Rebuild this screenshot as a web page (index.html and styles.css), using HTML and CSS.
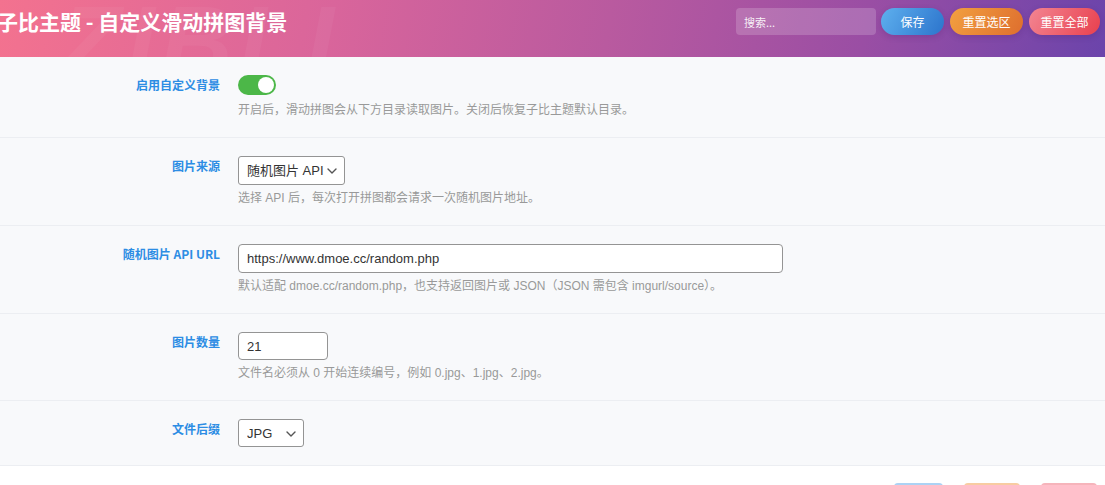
FILE: index.html
```html
<!DOCTYPE html>
<html>
<head>
  <link rel="stylesheet" href="styles.css">
</head>
<body>
  <div class="topbar">
    <span class="watermark">ZIBLL</span>
    <h1 class="title">子比主题 - 自定义滑动拼图背景</h1>
    <div class="actions">
      <input type="text" class="search" placeholder="搜索...">
      <button class="btn btn-save">保存</button>
      <button class="btn btn-reset">重置选区</button>
      <button class="btn btn-reset-all">重置全部</button>
    </div>
  </div>

  <div class="options">
    <div class="row">
      <div class="label">启用自定义背景</div>
      <div class="field">
        <div class="switch on"><span class="knob"></span></div>
        <div class="desc">开启后，滑动拼图会从下方目录读取图片。关闭后恢复子比主题默认目录。</div>
      </div>
    </div>

    <div class="row">
      <div class="label">图片来源</div>
      <div class="field">
        <div class="select-wrap source">
          <select>
            <option>随机图片 API</option>
            <option>本地目录</option>
          </select>
          <svg class="chevron" width="10" height="6" viewBox="0 0 10 6"><path d="M1 1l4 4 4-4" fill="none" stroke="#555" stroke-width="1.4" stroke-linecap="round" stroke-linejoin="round"/></svg>
        </div>
        <div class="desc">选择 API 后，每次打开拼图都会请求一次随机图片地址。</div>
      </div>
    </div>

    <div class="row">
      <div class="label">随机图片 API URL</div>
      <div class="field">
        <input type="text" class="text-input url" value="https://www.dmoe.cc/random.php">
        <div class="desc">默认适配 dmoe.cc/random.php，也支持返回图片或 JSON（JSON 需包含 imgurl/source）。</div>
      </div>
    </div>

    <div class="row">
      <div class="label">图片数量</div>
      <div class="field">
        <input type="text" class="text-input count" value="21">
        <div class="desc">文件名必须从 0 开始连续编号，例如 0.jpg、1.jpg、2.jpg。</div>
      </div>
    </div>

    <div class="row last">
      <div class="label">文件后缀</div>
      <div class="field">
        <div class="select-wrap ext">
          <select>
            <option>JPG</option>
            <option>PNG</option>
            <option>WEBP</option>
          </select>
          <svg class="chevron" width="10" height="6" viewBox="0 0 10 6"><path d="M1 1l4 4 4-4" fill="none" stroke="#555" stroke-width="1.4" stroke-linecap="round" stroke-linejoin="round"/></svg>
        </div>
      </div>
    </div>
  </div>

  <div class="footer">
    <button class="fbtn f-save">保存</button>
    <button class="fbtn f-reset">重置选区</button>
    <button class="fbtn f-reset-all">重置全部</button>
  </div>
</body>
</html>
```

FILE: styles.css
```css
body {
  font-family: 'Liberation Sans', 'Noto Sans CJK SC', sans-serif;
  margin: 0;
  color: #333;
  background: #fff;
  overflow: hidden;
}

.topbar {
  position: relative;
  height: 57px;
  box-sizing: border-box;
  padding: 8px 5px 0 0;
  display: flex;
  justify-content: space-between;
  align-items: flex-start;
  overflow: hidden;
  background: linear-gradient(100deg, #f3728f 0%, #d9659b 30%, #b95a9f 55%, #9a4ea4 78%, #6b44ab 100%);
}

.watermark {
  position: absolute;
  left: 60px;
  top: -16px;
  font-size: 100px;
  font-weight: bold;
  font-style: italic;
  letter-spacing: 6px;
  color: rgba(255, 255, 255, 0.045);
  pointer-events: none;
}

.title {
  position: relative;
  margin: 0 0 0 -3px;
  font-size: 21px;
  line-height: 26px;
  font-weight: bold;
  color: #fff;
  font-family: 'Noto Sans CJK SC', sans-serif;
}

.actions {
  position: relative;
  display: flex;
  gap: 6px;
}

.search {
  width: 140px;
  height: 27px;
  box-sizing: border-box;
  margin-right: -1px;
  padding: 0 8px;
  border: none;
  border-radius: 4px;
  background: rgba(255, 255, 255, 0.18);
  color: #fff;
  font-size: 11px;
  font-family: 'Noto Sans CJK SC', sans-serif;
}

.search::placeholder {
  color: rgba(255, 255, 255, 0.9);
}

.btn {
  height: 27px;
  border: none;
  border-radius: 14px;
  color: #fff;
  font-size: 12px;
  font-family: 'Noto Sans CJK SC', sans-serif;
  padding: 0;
  cursor: pointer;
  box-shadow: 0 2px 6px rgba(60, 20, 90, 0.2);
}

.btn-save {
  width: 63px;
  background: linear-gradient(120deg, #5eb0ee, #2c74cc);
}

.btn-reset {
  width: 73px;
  background: linear-gradient(120deg, #f2a040, #de6e2e);
}

.btn-reset-all {
  width: 71px;
  background: linear-gradient(120deg, #f38592, #e8404e);
}

.options {
  background: #f8f9fb;
}

.row {
  display: grid;
  grid-template-columns: 220px 1fr;
  column-gap: 18px;
  padding: 18px 0 19px;
  border-bottom: 1px solid #eceef2;
}

.row.last {
  padding-bottom: 18px;
}

.label {
  text-align: right;
  font-size: 12px;
  line-height: 20px;
  font-weight: bold;
  color: #2d8de4;
  font-family: 'Noto Sans CJK SC', sans-serif;
}

.field {
  display: flex;
  flex-direction: column;
  align-items: flex-start;
}

.desc {
  margin-top: 6px;
  height: 15px;
  font-size: 12px;
  line-height: 15px;
  color: #999;
}

.switch {
  position: relative;
  width: 38px;
  height: 20px;
  margin-bottom: 2px;
  border-radius: 10px;
  background: #4cb748;
}

.switch .knob {
  position: absolute;
  top: 2px;
  right: 2px;
  width: 16px;
  height: 16px;
  border-radius: 50%;
  background: #fff;
}

.select-wrap {
  position: relative;
}

.select-wrap select {
  display: block;
  appearance: none;
  -webkit-appearance: none;
  height: 29px;
  box-sizing: border-box;
  padding: 0 20px 0 8px;
  border: 1px solid #949494;
  border-radius: 3px;
  background: #fff;
  color: #333;
  font-size: 13px;
  font-family: 'Liberation Sans', 'Noto Sans CJK SC', sans-serif;
}

.select-wrap .chevron {
  position: absolute;
  top: 12px;
  pointer-events: none;
}

.source select {
  width: 107px;
}

.source .chevron {
  right: 8px;
}

.ext select {
  width: 66px;
  height: 28px;
}

.ext .chevron {
  right: 8px;
}

.text-input {
  height: 29px;
  box-sizing: border-box;
  padding: 0 8px;
  border: 1px solid #949494;
  border-radius: 4px;
  background: #fff;
  color: #333;
  font-size: 13px;
  font-family: 'Liberation Sans', 'Noto Sans CJK SC', sans-serif;
}

.url {
  width: 545px;
}

.count {
  width: 90px;
  height: 28px;
}

.footer {
  display: flex;
  justify-content: flex-end;
  gap: 21px;
  padding: 17px 8px 0 0;
}

.fbtn {
  height: 27px;
  border: none;
  border-radius: 4px;
  color: #fff;
  font-size: 12px;
  padding: 0;
  opacity: 0.5;
}

.f-save {
  width: 49px;
  background: #5aa6ea;
}

.f-reset {
  width: 56px;
  background: #f19a45;
}

.f-reset-all {
  width: 56px;
  background: #ee6a78;
}
```
